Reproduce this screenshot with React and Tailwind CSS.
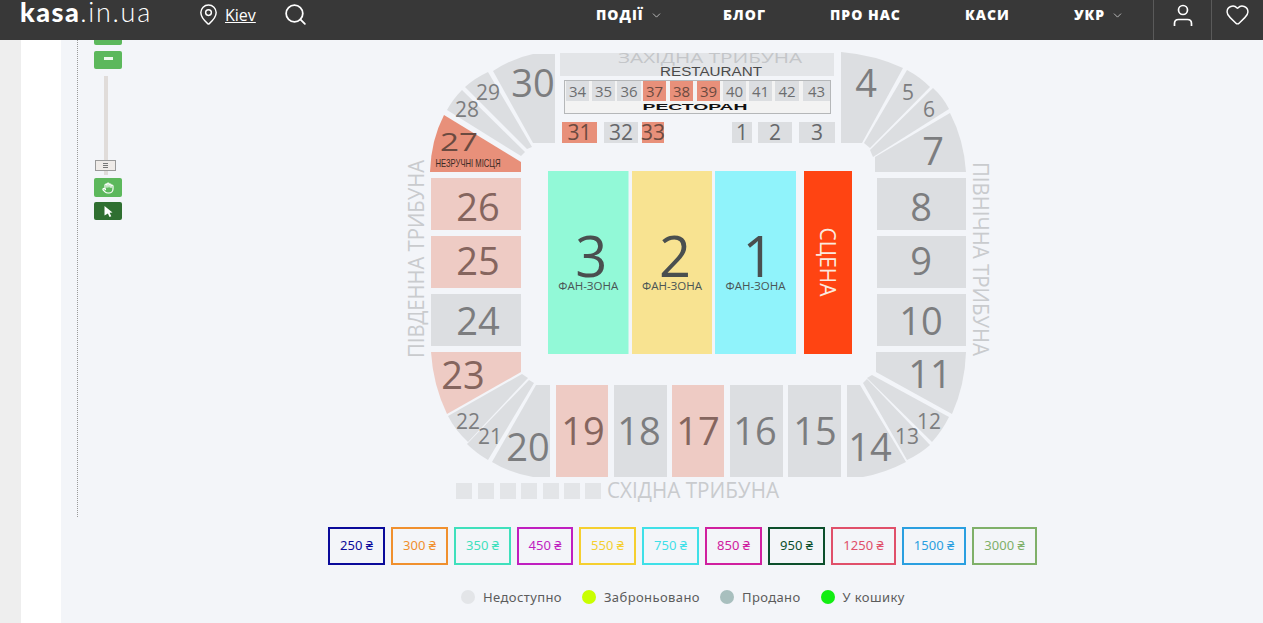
import { ChevronDown, Heart, MapPin, Search, Hand } from 'lucide-react';

const GRAY = '#dcdee1';
const PINK = '#eecbc4';
const SALMON = '#e8907a';

// sectors of the seat map, in page coordinates
const curved = [
  { n: '30', d: 'M555 54L555 143L533 143L493 71Q513 58 533 54Z', x: 533, y: 97, s: 38 },
  { n: '29', d: 'M465 87Q475 78 488 72L532 147L527 149Z', x: 488, y: 100, s: 21 },
  { n: '28', d: 'M447 110Q453 99 462 90L525 152L521 156Z', x: 467, y: 117, s: 21 },
  { n: '4', d: 'M841 52Q875 55 903 68L862 143L841 143Z', x: 866, y: 97, s: 38 },
  { n: '5', d: 'M907 70Q920 77 930 87L870 148L864 143Z', x: 908, y: 100, s: 21 },
  { n: '6', d: 'M933 88Q943 97 949 109L873 157L870 150Z', x: 929, y: 117, s: 21 },
  { n: '7', d: 'M950 113Q964 140 966 172L875 172L875 157Z', x: 933, y: 165, s: 38 },
  { n: '11', d: 'M876 372L876 352L966 352Q965 385 952 414Z', x: 930, y: 388, s: 38 },
  { n: '12', d: 'M872 375L949 417Q942 431 932 442L867 378Z', x: 929, y: 429, s: 21 },
  { n: '13', d: 'M863 383L867 379L930 445Q920 454 907 460Z', x: 907, y: 444, s: 21 },
  { n: '14', d: 'M847 385L860 385L906 462Q885 473 863 477L847 477Z', x: 870, y: 461, s: 38 },
  { n: '22', d: 'M448 416L522 374L528 378L468 442Q455 430 448 416Z', x: 468, y: 429, s: 21 },
  { n: '21', d: 'M467 444L529 380L534 383L488 460Q476 453 467 444Z', x: 490, y: 444, s: 21 },
  { n: '20', d: 'M492 462L536 385L550 385L550 477L533 477Q510 473 492 462Z', x: 528, y: 461, s: 38 },
];

const blocks = [
  { n: '26', x: 431, y: 178, w: 90, h: 52, c: PINK, tx: 478, ty: 221 },
  { n: '25', x: 431, y: 236, w: 90, h: 52, c: PINK, tx: 478, ty: 275 },
  { n: '24', x: 431, y: 294, w: 90, h: 52, c: GRAY, tx: 478, ty: 335 },
  { n: '8', x: 877, y: 178, w: 89, h: 52, c: GRAY, tx: 921, ty: 221 },
  { n: '9', x: 877, y: 236, w: 89, h: 52, c: GRAY, tx: 921, ty: 275 },
  { n: '10', x: 877, y: 294, w: 89, h: 52, c: GRAY, tx: 921, ty: 335 },
  { n: '19', x: 556, y: 385, w: 52, h: 92, c: PINK, tx: 583, ty: 445 },
  { n: '18', x: 614, y: 385, w: 53, h: 92, c: GRAY, tx: 639, ty: 445 },
  { n: '17', x: 672, y: 385, w: 52, h: 92, c: PINK, tx: 698, ty: 445 },
  { n: '16', x: 730, y: 385, w: 53, h: 92, c: GRAY, tx: 755, ty: 445 },
  { n: '15', x: 788, y: 385, w: 53, h: 92, c: GRAY, tx: 815, ty: 445 },
];

const upper = [
  { n: '31', x: 562, w: 35, c: SALMON },
  { n: '32', x: 604, w: 34, c: GRAY },
  { n: '33', x: 642, w: 22, c: SALMON },
  { n: '1', x: 732, w: 20, c: GRAY },
  { n: '2', x: 758, w: 34, c: GRAY },
  { n: '3', x: 799, w: 36, c: GRAY },
];

const restaurant = [
  { n: '34', x: 566, w: 23 },
  { n: '35', x: 592, w: 23 },
  { n: '36', x: 617, w: 24 },
  { n: '37', x: 643, w: 23, hot: true },
  { n: '38', x: 670, w: 23, hot: true },
  { n: '39', x: 697, w: 23, hot: true },
  { n: '40', x: 723, w: 23 },
  { n: '41', x: 749, w: 23 },
  { n: '42', x: 775, w: 24 },
  { n: '43', x: 803, w: 27 },
];

const fans = [
  { n: '3', x: 548, w: 80.5, c: '#92f9d7' },
  { n: '2', x: 632, w: 80, c: '#f8e391' },
  { n: '1', x: 715, w: 81, c: '#90f3fb' },
];

const prices = [
  ['250 ₴', 'w-[57px] border-[#0a0a9a] text-[#0a0a9a]'],
  ['300 ₴', 'w-[57px] border-[#f0902e] text-[#f0902e]'],
  ['350 ₴', 'w-[57px] border-[#3fe0bc] text-[#3fe0bc]'],
  ['450 ₴', 'w-[56px] border-[#c01fc0] text-[#c01fc0]'],
  ['550 ₴', 'w-[57px] border-[#f5cf30] text-[#f5cf30]'],
  ['750 ₴', 'w-[57px] border-[#3fe0e8] text-[#3fe0e8]'],
  ['850 ₴', 'w-[57px] border-[#d0209f] text-[#d0209f]'],
  ['950 ₴', 'w-[57px] border-[#0c4f2c] text-[#0c4f2c]'],
  ['1250 ₴', 'w-[65px] border-[#e0506a] text-[#e0506a]'],
  ['1500 ₴', 'w-[64px] border-[#2a9fe0] text-[#2a9fe0]'],
  ['3000 ₴', 'w-[65px] border-[#7fb069] text-[#7fb069]'],
];

const statuses = [
  ['Недоступно', 'bg-[#e3e5e8]', 'mr-[20px]'],
  ['Заброньовано', 'bg-[#c9ff00]', 'mr-[20px]'],
  ['Продано', 'bg-[#a8bfbe]', 'mr-[20px]'],
  ['У кошику', 'bg-[#12ee12]', ''],
];

const navItems = [
  { label: 'ПОДІЇ', w: 'w-[127px]', chevron: true },
  { label: 'БЛОГ', w: 'w-[107px]' },
  { label: 'ПРО НАС', w: 'w-[135px]' },
  { label: 'КАСИ', w: 'w-[109px]' },
  { label: 'УКР', w: 'w-[80px]', chevron: true },
];

function Num({ x, y, s, children, fill = '#7c7d7f' }) {
  return (
    <text x={x} y={y} fontSize={s} fill={fill} textAnchor="middle" fontFamily="'Open Sans', sans-serif">
      {children}
    </text>
  );
}

function StadiumMap() {
  return (
    <svg width="1141" height="477" viewBox="122 40 1141 477" className="block shrink-0">
      {curved.map(c => (
        <g key={c.n}>
          <path d={c.d} fill={GRAY} />
          <Num x={c.x} y={c.y} s={c.s}>{c.n}</Num>
        </g>
      ))}

      {/* 27 and 23 have their own colours */}
      <path d="M444 115L521 162L521 172L430 172Q431 140 444 115Z" fill={SALMON} />
      <text x="459" y="151" fontSize="25" fill="#6b4a40" textAnchor="middle" textLength="38" lengthAdjust="spacingAndGlyphs" fontFamily="'Open Sans', sans-serif">27</text>
      <text x="468" y="167" fontSize="11" fill="#3a2a25" textAnchor="middle" textLength="65" lengthAdjust="spacingAndGlyphs" fontFamily="'Liberation Sans', sans-serif">НЕЗРУЧНІ МІСЦЯ</text>
      <path d="M431 352L521 352L521 372L447 414Q433 385 431 352Z" fill={PINK} />
      <Num x={463} y={389} s={38} fill="#85655e">23</Num>

      {blocks.map(b => (
        <g key={b.n}>
          <rect x={b.x} y={b.y} width={b.w} height={b.h} fill={b.c} />
          <Num x={b.tx} y={b.ty} s={38} fill={b.c === PINK ? '#85655e' : '#7c7d7f'}>{b.n}</Num>
        </g>
      ))}

      {/* west stand and restaurant */}
      <rect x="560" y="53" width="274" height="23" fill="#e3e5e8" />
      <text x="710" y="63" fontSize="15" fill="#c4c6c9" textAnchor="middle" textLength="184" lengthAdjust="spacingAndGlyphs" fontFamily="'Open Sans', sans-serif">ЗАХІДНА ТРИБУНА</text>
      <text x="711" y="76" fontSize="12" fill="#4a4a4a" textAnchor="middle" textLength="102" lengthAdjust="spacingAndGlyphs" fontFamily="'Liberation Sans', sans-serif">RESTAURANT</text>
      <rect x="564.5" y="80.5" width="266" height="33" fill="#f3f3f3" stroke="#b5b7b9" />
      {restaurant.map(r => (
        <g key={r.n}>
          <rect x={r.x} y="81" width={r.w} height="20" fill={r.hot ? SALMON : GRAY} />
          <Num x={r.x + r.w / 2} y="97" s={15} fill={r.hot ? '#6b4a40' : '#6c6d6f'}>{r.n}</Num>
        </g>
      ))}
      <text x="695" y="110" fontSize="8.5" fill="#111" textAnchor="middle" textLength="105" lengthAdjust="spacingAndGlyphs" fontFamily="'Liberation Sans', sans-serif" fontWeight="700">РЕСТОРАН</text>

      {upper.map(u => (
        <g key={u.n}>
          <rect x={u.x} y="122" width={u.w} height="21" fill={u.c} />
          <Num x={u.x + u.w / 2} y="140" s={21} fill={u.c === SALMON ? '#6b4a40' : '#66676a'}>{u.n}</Num>
        </g>
      ))}

      {fans.map(f => (
        <g key={f.n}>
          <rect x={f.x} y="171" width={f.w} height="183" fill={f.c} />
          <text x={f.x + f.w / 2 + 3} y="277" fontSize="56" fill="#4a4f4f" textAnchor="middle" fontFamily="'Open Sans', sans-serif">{f.n}</text>
          <text x={f.x + f.w / 2} y="290" fontSize="11.5" fill="#4a5555" textAnchor="middle" textLength="60" lengthAdjust="spacingAndGlyphs" fontFamily="'Open Sans', sans-serif">ФАН-ЗОНА</text>
        </g>
      ))}
      <rect x="804" y="171" width="48" height="183" fill="#ff4412" />
      <text transform="translate(820 262) rotate(90)" fontSize="22" fill="#fbe9df" textAnchor="middle" textLength="69" lengthAdjust="spacingAndGlyphs" fontFamily="'Open Sans', sans-serif">СЦЕНА</text>

      {/* stand names */}
      <text transform="translate(424 259) rotate(-90)" fontSize="21" fill="#c9cbce" textAnchor="middle" textLength="198" lengthAdjust="spacingAndGlyphs" fontFamily="'Open Sans', sans-serif">ПІВДЕННА ТРИБУНА</text>
      <text transform="translate(973 259) rotate(90)" fontSize="21" fill="#c9cbce" textAnchor="middle" textLength="194" lengthAdjust="spacingAndGlyphs" fontFamily="'Open Sans', sans-serif">ПІВНІЧНА ТРИБУНА</text>
      <text x="693" y="498" fontSize="21" fill="#c9cbce" textAnchor="middle" textLength="172" lengthAdjust="spacingAndGlyphs" fontFamily="'Open Sans', sans-serif">СХІДНА ТРИБУНА</text>
      {[456, 478, 500, 521, 543, 564, 585].map(x => (
        <rect key={x} x={x} y="483" width="16" height="16" fill="#e3e5e8" />
      ))}
    </svg>
  );
}

function Header() {
  return (
    <header className="h-10 shrink-0 bg-[#383838] flex items-stretch text-white">
      <div className="pl-5 w-[199px] shrink-0 flex items-start font-['Lato',sans-serif]">
        <span className="text-[27px] leading-[24px] font-black tracking-[1.5px]">kasa</span>
        <span className="text-[27px] leading-[24px] font-light tracking-[1.7px]">.in.ua</span>
      </div>
      <div className="w-[397px] shrink-0 flex items-start pt-[3px] font-['Open_Sans',sans-serif]">
        <MapPin size={23} strokeWidth={1.5} className="-ml-[2px]" />
        <a className="ml-[5px] mt-[2px] text-[16px] leading-5 underline">Kiev</a>
        <Search size={25} strokeWidth={1.7} className="ml-[27px] -mt-[1px]" />
      </div>
      <nav className="flex items-start pt-[5px] font-['Open_Sans',sans-serif]">
        {navItems.map(item => (
          <div key={item.label} className={`${item.w} flex items-center`}>
            <span className="text-[14px] leading-5 font-extrabold tracking-[1px]">{item.label}</span>
            {item.chevron && <ChevronDown size={13} strokeWidth={1.4} className="ml-[6px] text-[#ddd]" />}
          </div>
        ))}
      </nav>
      <div className="w-[58px] shrink-0 ml-[-1px] border-l border-[#5a5a5a] flex justify-center pt-[2px]">
        <svg width="24" height="26" viewBox="0 0 24 26" fill="none" stroke="currentColor" strokeWidth="1.7">
          <circle cx="12" cy="8" r="4.5" />
          <path d="M3.5 24v-2.5q0-4 4-4h9q4 0 4 4V24" />
        </svg>
      </div>
      <div className="flex-1 border-l border-[#5a5a5a] flex justify-center pt-[2px]">
        <Heart size={25} strokeWidth={1.4} />
      </div>
    </header>
  );
}

function ZoomControls() {
  return (
    <div className="ml-4 pl-4 w-[45px] shrink-0 border-l border-dotted border-[#9a9a9a] flex flex-col items-start">
      <div className="w-7 h-[5px] bg-[#5cb85c] rounded-b-[2px]" />
      <div className="mt-[6px] w-7 h-[18px] bg-[#5cb85c] rounded-[2px] flex justify-center pt-[6px]">
        <div className="w-[9px] h-[3px] bg-white/90" />
      </div>
      <div className="relative mt-[7px] ml-[10px] w-1 h-[99px] bg-[#e0dcda]">
        <div className="absolute left-[-9px] top-[84px] w-[21px] h-[11px] bg-[#efebe8] border border-[#9a9a9a] flex flex-col items-center justify-center gap-[1px]">
          <div className="w-[5px] h-px bg-[#777]" />
          <div className="w-[5px] h-px bg-[#777]" />
          <div className="w-[5px] h-px bg-[#777]" />
        </div>
      </div>
      <div className="mt-[3px] w-7 h-[19px] bg-[#5cb85c] rounded-[2px] flex items-center justify-center">
        <Hand size={12} strokeWidth={2.4} className="text-white" />
      </div>
      <div className="mt-[5px] w-7 h-[18px] bg-[#2f6f31] rounded-[2px] flex items-center justify-center">
        <svg width="9" height="11" viewBox="0 0 9 11" className="fill-white">
          <path d="M0.5 0L8.5 6.5L5.6 6.7L7.3 10.2L5.5 11L3.9 7.4L0.5 9.5Z" />
        </svg>
      </div>
    </div>
  );
}

export default function App() {
  return (
    <div className="h-screen overflow-hidden flex flex-col bg-[#f3f5f9]">
      <Header />
      <main className="flex-1 flex min-h-0">
        <div className="w-[21px] shrink-0 bg-[#eeeeee]" />
        <div className="w-10 shrink-0 bg-white" />
        <div className="flex-1 min-w-0 flex flex-col font-['Noto_Sans',sans-serif]">
          <div className="flex h-[477px] shrink-0">
            <ZoomControls />
            <StadiumMap />
          </div>
          <div className="mt-[10px] pl-[267px] flex gap-[6px]">
            {prices.map(([label, cls]) => (
              <div key={label} className={`${cls} h-[38px] shrink-0 border-2 flex items-center justify-center text-[13px]`}>
                {label}
              </div>
            ))}
          </div>
          <div className="mt-[22px] pl-[400px] flex items-center">
            {statuses.map(([label, dot, gap]) => (
              <div key={label} className={`flex items-center ${gap}`}>
                <span className={`${dot} w-[14px] h-[14px] rounded-full`} />
                <span className="ml-2 text-[13px] leading-5 tracking-[0.4px] text-[#5c5c5c]">{label}</span>
              </div>
            ))}
          </div>
        </div>
      </main>
    </div>
  );
}
